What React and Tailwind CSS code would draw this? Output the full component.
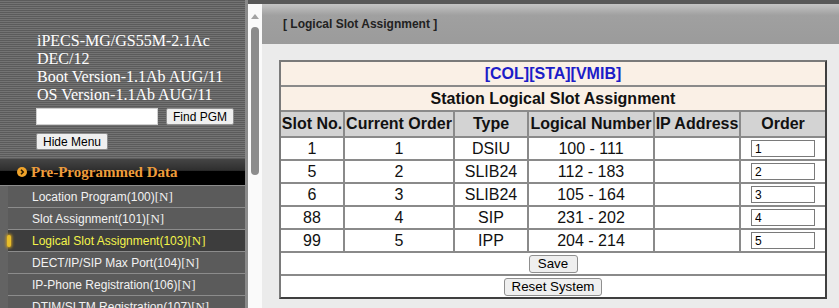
import React from 'react';

const menu = [
  { label: 'Location Program(100)' },
  { label: 'Slot Assignment(101)' },
  { label: 'Logical Slot Assignment(103)', active: true },
  { label: 'DECT/IP/SIP Max Port(104)' },
  { label: 'IP-Phone Registration(106)' },
  { label: 'DTIM/SLTM Registration(107)' },
];

const rows = [
  ['1', '1', 'DSIU', '100 - 111', '', '1'],
  ['5', '2', 'SLIB24', '112 - 183', '', '2'],
  ['6', '3', 'SLIB24', '105 - 164', '', '3'],
  ['88', '4', 'SIP', '231 - 202', '', '4'],
  ['99', '5', 'IPP', '204 - 214', '', '5'],
];

const heads = ['Slot No.', 'Current Order', 'Type', 'Logical Number', 'IP Address', 'Order'];

function Sidebar() {
  return (
    <aside className="flex h-[308px] w-[245px] shrink-0 flex-col overflow-hidden">
      <div className="flex h-[159px] shrink-0 flex-col bg-[repeating-linear-gradient(180deg,#5b5b5b_0px,#5b5b5b_1px,#737373_1px,#737373_2px)] pl-[36px] pt-[32px]">
        <div className="pl-[1px] font-['Liberation_Serif',serif] text-[16px] leading-[18px] text-white">
          <div>iPECS-MG/GS55M-2.1Ac</div>
          <div>DEC/12</div>
          <div>Boot Version-1.1Ab AUG/11</div>
          <div>OS Version-1.1Ab AUG/11</div>
        </div>
        <div className="mt-[4px] flex items-center gap-[8px]">
          <input className="h-[17px] w-[122px] border border-[#d0d0d0] bg-white outline-none" />
          <button className="h-[17px] rounded-[2px] border border-[#8f8f8f] bg-[#efefef] px-[6px] text-[12px] leading-[14px] text-black">
            Find PGM
          </button>
        </div>
        <div className="mt-[8px] flex">
          <button className="h-[17px] rounded-[2px] border border-[#8f8f8f] bg-[#efefef] px-[6px] text-[12px] leading-[14px] text-black">
            Hide Menu
          </button>
        </div>
      </div>
      <div className="flex h-[27px] shrink-0 items-center gap-[4px] border-b border-[#8c8c8c] bg-[linear-gradient(180deg,#454545_0%,#2e2e2e_44%,#000_46%,#000_100%)] pl-[17px]">
        <svg width="10" height="10" viewBox="0 0 10 10">
          <circle cx="5" cy="5" r="5" fill="#f0a32a" />
          <path d="M4 2.8 L6.2 5 L4 7.2" stroke="#2a1a00" strokeWidth="1.6" fill="none" />
        </svg>
        <span className="font-['Liberation_Serif',serif] text-[15px] font-bold text-[#ee9d3c]">
          Pre-Programmed Data
        </span>
      </div>
      <div className="flex-1 shrink-0 bg-[#636363]">
        {menu.map((m) => (
          <div
            key={m.label}
            className={
              'relative ml-[8px] flex h-[22px] items-center border-b border-[#8c8c8c] pl-[24px] text-[12px] ' +
              (m.active ? 'bg-[#3d3d3d] text-[#f4f44a]' : 'bg-[#5b5b5b] text-[#f2f2f2]')
            }
          >
            {m.active && (
              <span className="absolute left-[-1px] top-[5px] h-[12px] w-[4px] rounded-full bg-[#e7bd2a] shadow-[0_0_3px_1px_#c89a20]" />
            )}
            {m.label}
            <span className="font-['Liberation_Serif',serif] text-[13px]">[N]</span>
          </div>
        ))}
      </div>
    </aside>
  );
}

function Cell({ children }) {
  return (
    <div className="flex items-center justify-center overflow-hidden bg-white text-[16px] leading-[18px] text-[#111]">
      {children}
    </div>
  );
}

function SlotTable() {
  return (
    <div className="w-[548px] border-2 border-b-[#3f3f3f] border-l-[#7a7a7a] border-r-[#3f3f3f] border-t-[#7a7a7a]">
      <div className="grid grid-cols-[62px_108px_72px_124px_84px_84px] grid-rows-[23px_23px_24px_21px_21px_21px_21px_21px_21px_21px] gap-[2px] bg-[#8a8a8a]">
        <div className="col-span-6 flex items-center justify-center bg-[#faf0e6] text-[16px] font-bold leading-[18px] text-[#1c1cc8]">
          [COL][STA][VMIB]
        </div>
        <div className="col-span-6 flex items-center justify-center bg-[#faf0e6] text-[16px] font-bold leading-[18px] text-[#111]">
          Station Logical Slot Assignment
        </div>
        {heads.map((h) => (
          <div key={h} className="flex items-center justify-center bg-[#d3d3d3] text-[16px] font-bold leading-[18px] text-[#111]">
            {h}
          </div>
        ))}
        {rows.map((r) => (
          <React.Fragment key={r[0]}>
            <Cell>{r[0]}</Cell>
            <Cell>{r[1]}</Cell>
            <Cell>{r[2]}</Cell>
            <Cell>{r[3]}</Cell>
            <Cell>{r[4]}</Cell>
            <Cell>
              <input
                defaultValue={r[5]}
                className="h-[17px] w-[64px] border border-[#7a7a7a] bg-white pl-[3px] text-[12px] leading-[14px] text-black outline-none"
              />
            </Cell>
          </React.Fragment>
        ))}
        <div className="col-span-6 flex items-center justify-center bg-white">
          <button className="h-[18px] w-[49px] rounded-[3px] border border-[#8f8f8f] bg-[#efefef] text-[13.33px] leading-[15px] text-black">
            Save
          </button>
        </div>
        <div className="col-span-6 flex items-center justify-center bg-white">
          <button className="h-[18px] rounded-[3px] border border-[#8f8f8f] bg-[#efefef] px-[7px] text-[13.33px] leading-[15px] text-black">
            Reset System
          </button>
        </div>
      </div>
    </div>
  );
}

export default function App() {
  return (
    <div className="flex h-[308px] w-[839px] overflow-hidden font-['Liberation_Sans',Arial,sans-serif]">
      <Sidebar />
      <div className="w-[3px] shrink-0 bg-[#8a8a8a]" />
      <div className="flex flex-1 flex-col">
        <div className="h-[4px] shrink-0 bg-[#585858]" />
        <div className="flex flex-1">
          <div className="flex w-[14px] shrink-0 flex-col items-center bg-[#fafafa] pt-[10px]">
            <svg width="8" height="5" viewBox="0 0 8 5">
              <path d="M0 5 L4 0 L8 5 Z" fill="#a3a3a3" />
            </svg>
            <div className="mt-[8px] h-[148px] w-[8px] rounded-full bg-[#8c8c8c]" />
          </div>
          <main className="flex flex-1 flex-col bg-[#ebebeb]">
            <div className="flex h-[40px] shrink-0 items-center bg-[linear-gradient(180deg,#c4c4c4_0%,#a0a0a0_28%,#9b9b9b_100%)] pl-[21px] text-[12px] font-bold text-[#222]">
              [ Logical Slot Assignment ]
            </div>
            <div className="pl-[17px] pt-[16px]">
              <SlotTable />
            </div>
          </main>
        </div>
      </div>
    </div>
  );
}
